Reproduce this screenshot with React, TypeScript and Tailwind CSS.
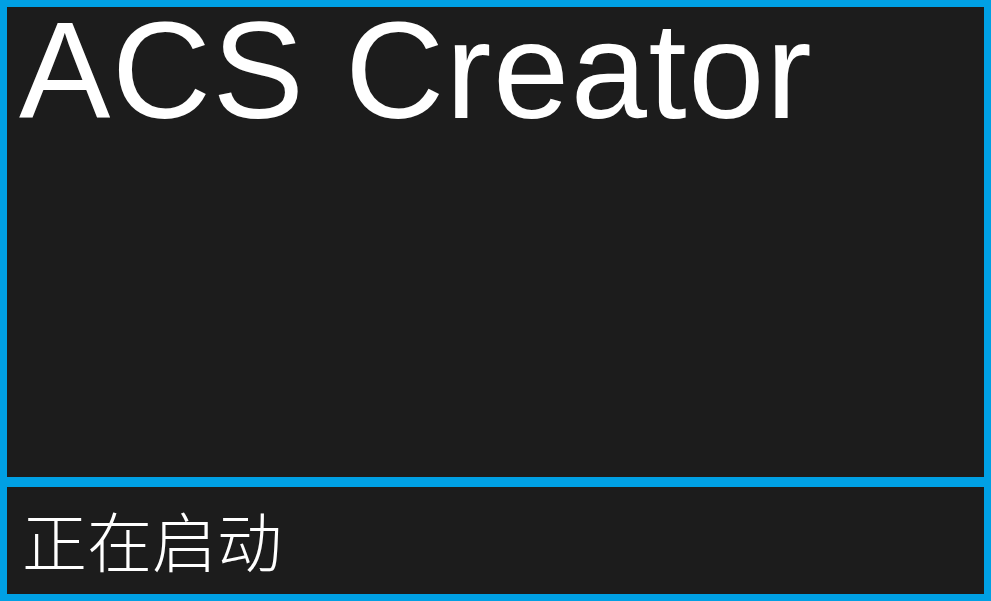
export default function App() {
  return (
    <div className="w-[991px] h-[601px] bg-[#00a0e4] p-[7px] flex flex-col gap-[10px]">
      <div className="h-[470px] bg-[#1c1c1c]">
        <div
          className="text-white text-[137px] leading-[0.93] pl-[12px] tracking-[1.6px] whitespace-nowrap"
          style={{ fontFamily: '"Liberation Sans", Arial, sans-serif' }}
        >
          ACS Creator
        </div>
      </div>
      <div className="flex-1 bg-[#1c1c1c] flex items-center">
        <div
          className="text-white text-[65px] leading-[1.2] pl-[15px] -mt-[4px] font-light"
          style={{ fontFamily: '"Noto Sans CJK SC", sans-serif' }}
        >
          正在启动
        </div>
      </div>
    </div>
  );
}
